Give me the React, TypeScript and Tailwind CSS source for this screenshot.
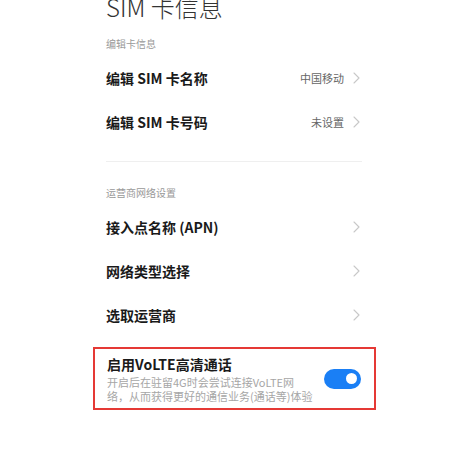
import React from "react";

const font = { fontFamily: '"Noto Sans CJK SC", "Noto Sans", sans-serif' };

function Chevron() {
  return (
    <svg width="7" height="12" viewBox="0 0 7 12" className="shrink-0">
      <path d="M1 1 L6 6 L1 11" fill="none" stroke="#c8c8c8" strokeWidth="1.1" strokeLinecap="round" strokeLinejoin="round" />
    </svg>
  );
}

function Row({ label, value }: { label: string; value?: string }) {
  return (
    <div className="h-[44px] flex items-center justify-between">
      <span className="text-[14px] font-semibold text-[#1a1a1a] leading-none">{label}</span>
      <div className="flex items-center gap-[9px] pr-[2px]">
        {value && <span className="text-[11px] text-[#666666] leading-none">{value}</span>}
        <Chevron />
      </div>
    </div>
  );
}

export default function App() {
  return (
    <div className="w-[456px] h-[469px] bg-white overflow-hidden" style={font}>
      <div className="ml-[106px] w-[256px]">
        <div className="mt-[-7px] h-[27px] text-[24px] leading-[27px] font-light text-[#333333] whitespace-nowrap">
          SIM 卡信息
        </div>
        <div className="mt-[13px] h-[20px] flex items-center text-[10px] text-[#999999]">编辑卡信息</div>
        <div className="mt-[3px]">
          <Row label="编辑 SIM 卡名称" value="中国移动" />
          <Row label="编辑 SIM 卡号码" value="未设置" />
        </div>
        <div className="mt-[17px] h-px bg-[#efefef]" />
        <div className="mt-[20px] h-[20px] flex items-center text-[10px] text-[#999999]">运营商网络设置</div>
        <div className="mt-[3px]">
          <Row label="接入点名称 (APN)" />
          <Row label="网络类型选择" />
          <Row label="选取运营商" />
        </div>
      </div>
      <div className="mt-[10px] ml-[93px] w-[283px] h-[63px] border-2 border-[#e53935] flex items-center justify-between pl-[12px] pr-[13px]">
        <div className="flex flex-col">
          <span className="text-[14px] leading-[18px] font-semibold text-[#1a1a1a] whitespace-nowrap">启用VoLTE高清通话</span>
          <span className="mt-[2px] text-[11px] leading-[14px] text-[#a6a6a6] whitespace-nowrap">
            开启后在驻留4G时会尝试连接VoLTE网
            <br />
            络，从而获得更好的通信业务(通话等)体验
          </span>
        </div>
        <div className="w-[37px] h-[20px] rounded-full bg-[#1a7ff5] flex items-center justify-end pr-[4px] shrink-0">
          <div className="w-[11px] h-[11px] rounded-full bg-white" />
        </div>
      </div>
    </div>
  );
}
